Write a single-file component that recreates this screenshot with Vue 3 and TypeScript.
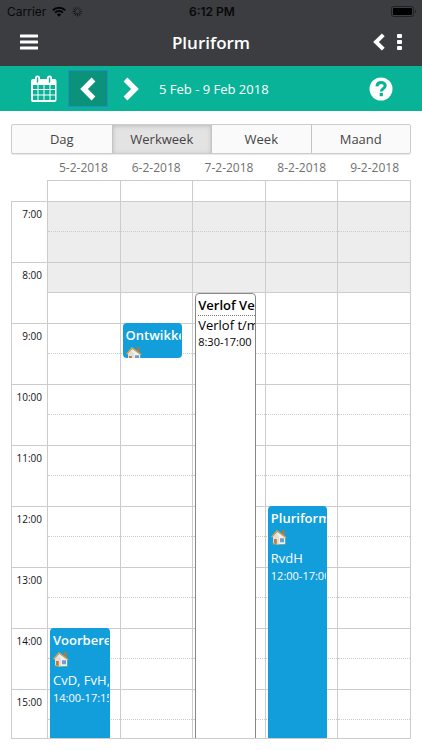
<script setup lang="ts">
import { ref } from 'vue'

interface CalendarEvent {
  id: number
  day: number
  start: number
  end: number
  title: string
  people: string
  time: string
  home: boolean
  kind: 'work' | 'leave'
}

const HOUR_HEIGHT = 61
const FIRST_HOUR = 7

const views = ['Dag', 'Werkweek', 'Week', 'Maand']
const activeView = ref('Werkweek')
const days = ['5-2-2018', '6-2-2018', '7-2-2018', '8-2-2018', '9-2-2018']
const hours = [7, 8, 9, 10, 11, 12, 13, 14, 15]

const events: CalendarEvent[] = [
  { id: 1, day: 0, start: 14, end: 17.25, title: 'Voorbereiding', people: 'CvD, FvH, RvdH', time: '14:00-17:15', home: true, kind: 'work' },
  { id: 2, day: 1, start: 9, end: 9.57, title: 'Ontwikkeling', people: '', time: '', home: true, kind: 'work' },
  { id: 3, day: 2, start: 8.5, end: 17, title: 'Verlof Verlof', people: 'Verlof t/m', time: '8:30-17:00', home: false, kind: 'leave' },
  { id: 4, day: 3, start: 12, end: 17, title: 'Pluriform', people: 'RvdH', time: '12:00-17:00', home: true, kind: 'work' },
]

const eventsFor = (day: number) => events.filter((e) => e.day === day)

const place = (e: CalendarEvent) => ({
  top: `${Math.round((e.start - FIRST_HOUR) * HOUR_HEIGHT)}px`,
  height: `${Math.round((e.end - e.start) * HOUR_HEIGHT)}px`,
})
</script>

<template>
  <div class="app">
    <header class="top">
      <div class="status">
        <div class="status-left">
          <span>Carrier</span>
          <svg width="14" height="11" viewBox="0 0 14 11" aria-hidden="true">
            <g fill="none" stroke="#050506" stroke-width="2">
              <path d="M.8 4.2a8.8 8.8 0 0 1 12.4 0" />
              <path d="M3.1 6.6a5.5 5.5 0 0 1 7.8 0" />
            </g>
            <path d="M7 10.8 4.8 8.5a3.2 3.2 0 0 1 4.4 0z" fill="#050506" />
          </svg>
          <svg class="spinner" width="11" height="11" viewBox="0 0 12 12" aria-hidden="true">
            <g stroke="#101113" stroke-width="1" stroke-linecap="round">
              <path d="M6 1v2.500" opacity=".4" />
              <path d="m8.500 1.700-1.200 2.100" opacity=".5" />
              <path d="m10.300 3.500-2.100 1.200" opacity=".6" />
              <path d="M11 6H8.500" opacity=".7" />
              <path d="m10.300 8.500-2.100-1.200" opacity=".8" />
              <path d="m8.500 10.300-1.200-2.100" />
              <path d="M6 11V8.500" />
              <path d="m3.500 10.300 1.200-2.100" />
              <path d="m1.700 8.500 2.100-1.200" />
              <path d="M1 6h2.500" />
              <path d="m1.700 3.500 2.100 1.200" />
              <path d="m3.500 1.700 1.200 2.100" opacity=".7" />
            </g>
          </svg>
        </div>
        <span class="clock">6:12 PM</span>
        <div class="status-right">
          <svg width="26" height="11" viewBox="0 0 26 11" aria-hidden="true">
            <rect x=".5" y=".5" width="22" height="10" rx="2" fill="none" stroke="#202124" />
            <rect x="2" y="2" width="19" height="7" rx="1" fill="#000" />
            <path d="M24 4c1.300.4 1.300 2.600 0 3z" fill="#202124" />
          </svg>
        </div>
      </div>
      <div class="titlebar">
        <button class="icon-btn" type="button" aria-label="Menu">
          <svg width="18" height="16" viewBox="0 0 18 16"><g fill="#fff"><rect y=".5" width="18" height="3" rx=".6" /><rect y="6.500" width="18" height="3" rx=".6" /><rect y="12.500" width="18" height="3" rx=".6" /></g></svg>
        </button>
        <h1>Pluriform</h1>
        <div class="title-actions">
          <button class="icon-btn" type="button" aria-label="Terug">
            <svg width="12" height="18" viewBox="0 0 12 18"><path d="M10.300 1.800 3 9l7.300 7.200" fill="none" stroke="#fff" stroke-width="4" /></svg>
          </button>
          <button class="icon-btn" type="button" aria-label="Meer">
            <svg width="5" height="18" viewBox="0 0 5 18"><g fill="#fff"><rect y="1" width="5" height="4" rx="1" /><rect y="7" width="5" height="4" rx="1" /><rect y="13" width="5" height="4" rx="1" /></g></svg>
          </button>
        </div>
      </div>
    </header>

    <nav class="toolbar">
      <button class="icon-btn" type="button" aria-label="Kalender">
        <svg width="26" height="28" viewBox="0 0 26 28">
          <path fill="#fff" fill-rule="evenodd" d="M2 4h2V3a2.500 2.500 0 0 1 5 0v1h7V3a2.500 2.500 0 0 1 5 0v1h2.500a2 2 0 0 1 2 2v19a2 2 0 0 1-2 2H2a2 2 0 0 1-2-2V6a2 2 0 0 1 2-2zM2 10v4h4.500v-4zm5.500 0v4h5v-4zm6 0v4h5v-4zm6 0v4H24v-4zM2 15v4.500h4.500V15zm5.500 0v4.500h5V15zm6 0v4.500h5V15zm6 0v4.500H24V15zM2 20.500V25h4.500v-4.500zm5.500 0V25h5v-4.500zm6 0V25h5v-4.500zm6 0V25H24v-4.500z" />
          <path d="M6.500 3v4M18.500 3v4" stroke="#09b397" stroke-width="1.400" stroke-linecap="round" />
        </svg>
      </button>
      <button class="step step-focus" type="button" aria-label="Vorige week">
        <svg width="18" height="24" viewBox="0 0 18 24"><path d="M14.500 2.500 5 12l9.500 9.500" fill="none" stroke="#fff" stroke-width="5.400" /></svg>
      </button>
      <button class="step" type="button" aria-label="Volgende week">
        <svg width="18" height="24" viewBox="0 0 18 24"><path d="M3.500 2.500 13 12l-9.500 9.500" fill="none" stroke="#fff" stroke-width="5.400" /></svg>
      </button>
      <span class="range">5 Feb - 9 Feb 2018</span>
      <button class="icon-btn help" type="button" aria-label="Help">
        <svg width="24" height="24" viewBox="0 0 24 24">
          <circle cx="12" cy="12" r="11.500" fill="#fff" />
          <path d="M7.900 9.400c.3-2.600 2-3.900 4.300-3.900s4 1.400 4 3.300c0 2.700-3.900 2.900-3.900 5.600" fill="none" stroke="#09b397" stroke-width="3" />
          <rect x="10.700" y="16" width="3.200" height="3.200" fill="#09b397" />
        </svg>
      </button>
    </nav>

    <main class="content">
      <div class="tabs">
        <button
          v-for="view in views"
          :key="view"
          type="button"
          :class="['tab', { active: view === activeView }]"
          :aria-pressed="view === activeView"
          @click="activeView = view"
        >{{ view }}</button>
      </div>

      <div class="dates">
        <span v-for="day in days" :key="day">{{ day }}</span>
      </div>
      <div class="allday">
        <span v-for="day in days" :key="day"></span>
      </div>

      <div class="schedule">
        <div class="hours">
          <div v-for="hour in hours" :key="hour" class="hour-label">{{ hour }}:00</div>
        </div>
        <div v-for="(day, index) in days" :key="day" class="day">
          <div v-for="hour in hours" :key="hour" class="hour">
            <div :class="['half', { closed: hour < 9 }]"></div>
            <div :class="['half', 'second', { closed: hour < 8, opening: hour === 8 }]"></div>
          </div>
          <article
            v-for="event in eventsFor(index)"
            :key="event.id"
            :class="['event', event.kind]"
            :style="place(event)"
          >
            <h2>{{ event.title }}</h2>
            <svg v-if="event.home" class="house" width="16" height="16" viewBox="0 0 16 16" aria-hidden="true">
              <path d="M11.300 1h2.200v5h-2.200z" fill="#b7793b" />
              <path d="M2 7.500 6.500 3l7.700 5.500V15L6 15.500 2 14z" fill="#f2efed" />
              <path d="m2 7.500 3.500-4L8 8v7.300H5.800L2 14z" fill="#e2dedc" />
              <path d="M.6 8.300 6 1.700l9.200 7" fill="none" stroke="#e2a044" stroke-width="1.400" stroke-linejoin="round" />
              <path d="M3 10h2.800v5.200l-2.800-1z" fill="#c67c2c" />
              <path d="M9 9.200h4v4H9z" fill="#6c9fce" />
              <path d="M1 14.800 6 16l9-.7" stroke="#a7a467" fill="none" stroke-width=".6" />
            </svg>
            <p v-if="event.people" class="people">{{ event.people }}</p>
            <p v-if="event.time" class="time">{{ event.time }}</p>
          </article>
        </div>
      </div>
    </main>
  </div>
</template>

<style>
body {
  margin: 0;
  background: #fff;
}
</style>

<style scoped>
.app,
.app * {
  box-sizing: border-box;
}

.app {
  display: flex;
  flex-direction: column;
  height: 100vh;
  font-family: 'Open Sans', 'Noto Sans', sans-serif;
  color: #444;
}

button {
  margin: 0;
  padding: 0;
  border: 0;
  background: none;
  font: inherit;
  color: inherit;
  cursor: pointer;
}

svg {
  display: block;
}

.icon-btn {
  display: flex;
}

.top {
  background: #3b3d40;
}

.status {
  display: grid;
  grid-template-columns: 1fr auto 1fr;
  align-items: center;
  height: 22px;
  padding: 0 5px 0 7px;
  font-family: Inter, 'Liberation Sans', sans-serif;
  font-size: 12px;
  color: #08090a;
}

.status-left {
  display: flex;
  align-items: center;
  gap: 6px;
}

.clock {
  font-weight: 600;
}

.status-right {
  display: flex;
  justify-content: flex-end;
}

.titlebar {
  display: grid;
  grid-template-columns: 1fr auto 1fr;
  align-items: center;
  height: 44px;
  padding: 0 20px 4px;
}

.titlebar h1 {
  margin: 0;
  padding-top: 2px;
  font-size: 17px;
  line-height: 24px;
  font-weight: 600;
  color: #fff;
}

.title-actions {
  display: flex;
  justify-content: flex-end;
  gap: 12px;
}

.toolbar {
  display: flex;
  align-items: center;
  height: 45px;
  padding: 0 29px 0 31px;
  background: #09b397;
}

.step {
  display: flex;
  align-items: center;
  justify-content: center;
  width: 40px;
  height: 37px;
}

.step-focus {
  margin: 0 3px 0 11px;
  border: 1px solid #218fc2;
  background: #0a927b;
}

.range {
  margin-left: 8px;
  font-size: 13px;
  color: #fff;
}

.help {
  margin-left: auto;
}

.content {
  display: flex;
  flex: 1;
  flex-direction: column;
  min-height: 0;
  padding: 13px 11px 11px;
}

.tabs {
  display: grid;
  flex: none;
  grid-template-columns: repeat(4, minmax(0, 1fr));
  height: 30px;
  border: 1px solid #ccc;
  border-radius: 2px;
  box-shadow: 0 1px 1px #e8e8e8;
  background: #fafafa;
}

.tab {
  font-size: 13px;
  color: #444;
}

.tab + .tab {
  border-left: 1px solid #c4c4c4;
}

.tab.active {
  background: #e3e3e3;
  box-shadow: inset 0 1px 4px #bbb;
}

.dates,
.allday {
  display: grid;
  flex: none;
  grid-template-columns: repeat(5, minmax(0, 1fr));
  margin-left: 36px;
}

.dates {
  height: 26px;
  font-size: 12px;
  line-height: 28px;
  text-align: center;
  color: #707070;
}

.allday {
  height: 21px;
  border: 1px solid #ccc;
  border-width: 1px 1px 0 0;
}

.allday span {
  border-left: 1px solid #ccc;
}

.schedule {
  display: grid;
  flex: 1;
  grid-template-columns: 35px repeat(5, minmax(0, 1fr));
  min-height: 0;
  overflow: hidden;
  border: 1px solid #ccc;
  border-top: 0;
}

.hour-label {
  height: 61px;
  padding: 5px 5px 0 0;
  border-top: 1px solid #ccc;
  font-size: 10px;
  line-height: 14px;
  text-align: right;
  color: #111;
}

.day {
  position: relative;
  border-left: 1px solid #ccc;
}

.hour {
  display: grid;
  grid-template-rows: 30px 31px;
}

.half {
  border-top: 1px solid #ccc;
}

.half.second {
  border-top-style: dotted;
}

.half.opening {
  border-top-style: solid;
}

.half.closed {
  background: #ededed;
}

.event {
  position: absolute;
  left: 2px;
  right: 10px;
  overflow: hidden;
  padding: 3px 1px 0 3px;
  border-radius: 4px;
  white-space: nowrap;
  color: #fff;
  background: #129ddb;
}

.event h2,
.event p {
  margin: 0;
  overflow: hidden;
  font-size: 13px;
  line-height: 19px;
}

.event h2 {
  font-weight: 600;
}

.event .time {
  font-size: 11px;
  line-height: 15px;
}

.house {
  margin: 1px 0 4px;
}

.leave {
  right: 9px;
  padding: 2px 0 0 2px;
  border: 1px solid #888;
  color: #000;
  background: #fff;
}

.leave h2 {
  border-bottom: 1px dotted #777;
}

.leave .people {
  line-height: 18px;
}
</style>
